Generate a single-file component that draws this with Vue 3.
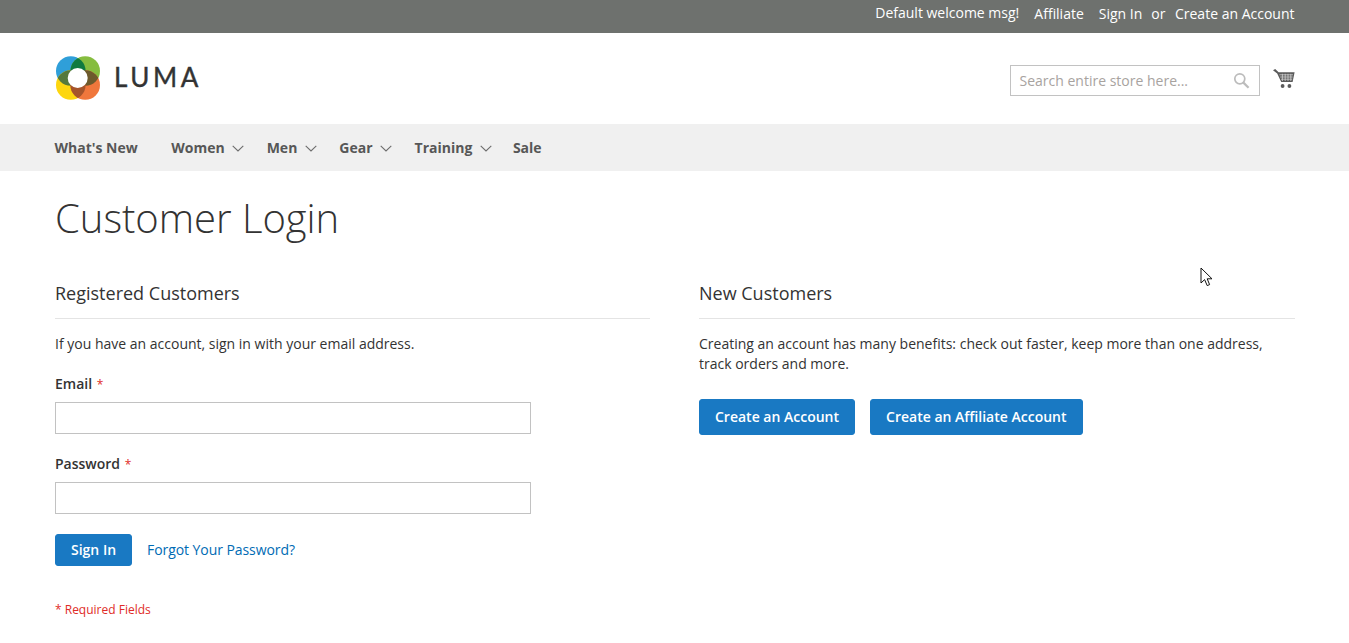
<script setup>
const topLinks = ['Affiliate', 'Sign In']
const navItems = [
  { label: "What's New", caret: false },
  { label: 'Women', caret: true },
  { label: 'Men', caret: true },
  { label: 'Gear', caret: true },
  { label: 'Training', caret: true },
  { label: 'Sale', caret: false }
]
</script>

<template>
  <div class="page">
    <div class="topbar">
      <span class="welcome">Default welcome msg!</span>
      <a v-for="l in topLinks" :key="l" class="toplink">{{ l }}</a>
      <span class="or">or</span>
      <a class="toplink last">Create an Account</a>
    </div>

    <header class="header">
      <div class="logo">
        <svg class="logo-mark" width="46" height="46" viewBox="0 0 46 46">
          <defs>
            <clipPath id="cb"><circle cx="15.8" cy="16" r="14.8" /></clipPath>
            <clipPath id="co"><circle cx="30.2" cy="30" r="14.8" /></clipPath>
          </defs>
          <circle cx="15.8" cy="16" r="14.8" fill="#2f9fd9" />
          <circle cx="30.2" cy="16" r="14.8" fill="#86bd3f" />
          <circle cx="15.8" cy="30" r="14.8" fill="#fdd60f" />
          <circle cx="30.2" cy="30" r="14.8" fill="#f0773c" />
          <g clip-path="url(#cb)"><circle cx="30.2" cy="16" r="14.8" fill="#0f7a40" /></g>
          <g clip-path="url(#cb)"><circle cx="15.8" cy="30" r="14.8" fill="#55793c" /></g>
          <g clip-path="url(#co)"><circle cx="30.2" cy="16" r="14.8" fill="#6d5a2c" /></g>
          <g clip-path="url(#co)"><circle cx="15.8" cy="30" r="14.8" fill="#a5542b" /></g>
          <circle cx="22.7" cy="23" r="10" fill="#fff" />
        </svg>
        <span class="logo-text">LUMA</span>
      </div>
      <div class="header-right">
        <div class="search">
          <span class="placeholder">Search entire store here...</span>
          <svg width="18" height="18" viewBox="0 0 18 18" fill="none" stroke="#bcbcbc">
            <circle cx="7.8" cy="6.8" r="5" stroke-width="1.7" />
            <path d="M11.4 10.6 16.6 15.8" stroke-width="2.2" />
          </svg>
        </div>
        <svg class="cart" width="22" height="20" viewBox="0 0 22 20">
          <path d="M0 1.2 2.2 0 5.6 3.2H21.6L19.6 13H8.2L4.2 4.4Z" fill="#5a5a5a" />
          <path d="M6.4 5.8H20M7.2 8H19.6M8 10.2H19.2M9.4 4.8V12M12.2 4.8V12M15 4.8V12M17.8 4.8V12" stroke="#d0d0d0" stroke-width=".8" fill="none" />
          <circle cx="9.6" cy="17" r="1.9" fill="#5a5a5a" />
          <circle cx="16.4" cy="17" r="1.9" fill="#5a5a5a" />
        </svg>
      </div>
    </header>

    <nav class="nav">
      <a v-for="n in navItems" :key="n.label" class="nav-item">
        <span>{{ n.label }}</span>
        <svg v-if="n.caret" class="caret" width="12" height="7" viewBox="0 0 12 7" fill="none">
          <path d="M.7.8 6 6 11.3.8" stroke="#6d6d6d" stroke-width="1.1" />
        </svg>
      </a>
    </nav>

    <main class="main">
      <h1 class="title">Customer Login</h1>
      <div class="columns">
        <section class="col">
          <h2 class="col-title">Registered Customers</h2>
          <p class="intro">If you have an account, sign in with your email address.</p>
          <label class="label">Email <em>*</em></label>
          <div class="input"></div>
          <label class="label">Password <em>*</em></label>
          <div class="input"></div>
          <div class="actions">
            <button class="btn">Sign In</button>
            <a class="forgot">Forgot Your Password?</a>
          </div>
          <p class="required">* Required Fields</p>
        </section>
        <section class="col right">
          <h2 class="col-title">New Customers</h2>
          <p class="intro">Creating an account has many benefits: check out faster, keep more than one address, track orders and more.</p>
          <div class="new-actions">
            <button class="btn">Create an Account</button>
            <button class="btn">Create an Affiliate Account</button>
          </div>
        </section>
      </div>
    </main>

    <svg class="cursor" width="14" height="21" viewBox="0 0 14 21">
      <path d="M1 1V16L4.6 12.6 7.2 18.6 9.6 17.6 7.2 11.8H12Z" fill="#fff" stroke="#111" stroke-width="1" stroke-linejoin="round" />
    </svg>
  </div>
</template>

<style>
html, body { margin: 0; background: #fff; }
</style>

<style scoped>
.page {
  position: relative;
  width: 1349px;
  height: 643px;
  overflow: hidden;
  font-family: "Open Sans", "Noto Sans", sans-serif;
  font-size: 14px;
  color: #333;
}
.topbar {
  height: 33px;
  box-sizing: border-box;
  background: #6e716e;
  color: #fff;
  display: flex;
  justify-content: flex-end;
  align-items: center;
  padding: 0 54.5px 6px 0;
  line-height: 20px;
}
.welcome { margin-right: 15px; padding-bottom: 2px; }
.toplink { margin-right: 15px; }
.toplink.last { margin-right: 0; }
.or { margin: 0 9.5px 0 -6px; }
.header {
  height: 91px;
  display: flex;
  justify-content: space-between;
  padding: 0 54px 0 55px;
}
.logo { display: flex; align-items: center; height: 89px; }
.logo-mark { margin-right: 13px; }
.logo-text {
  font-family: Lato, "Open Sans", sans-serif;
  font-size: 26px;
  letter-spacing: 3.6px;
  -webkit-text-stroke: 0.4px #333;
  color: #333;
  font-weight: 400;
  position: relative;
  top: -1px;
}
.header-right { display: flex; align-items: flex-start; padding-top: 32px; }
.search {
  width: 250px;
  height: 31px;
  box-sizing: border-box;
  border: 1px solid #c2c2c2;
  display: flex;
  align-items: center;
  justify-content: space-between;
  padding: 0 9px 0 8.5px;
}
.placeholder { color: #a8a3a0; font-size: 14px; }
.cart { margin-left: 13px; margin-top: 4px; }
.nav {
  height: 47px;
  background: #f0f0f0;
  display: flex;
  align-items: center;
  padding-left: 54.5px;
  color: #575757;
  font-weight: 700;
}
.nav-item { display: flex; align-items: center; margin-right: 33.5px; }
.nav-item:has(.caret) { margin-right: 22px; }
.nav-item:nth-child(5) { margin-right: 20.5px; }
.caret { margin-left: 7.5px; margin-right: 0.5px; margin-top: 2px; }
.main { padding: 0 54px 0 55px; }
.title {
  margin: 0;
  font-size: 40px;
  font-weight: 300;
  line-height: 50px;
  padding-top: 22px;
  color: #333;
  letter-spacing: -0.03px;
}
.columns { display: flex; margin-top: 38px; }
.col { width: 595px; }
.col.right { margin-left: 49px; width: 596px; }
.col-title {
  margin: 0;
  font-size: 18px;
  font-weight: 400;
  line-height: 24px;
  height: 37px;
  border-bottom: 1px solid #e4e4e4;
}
.intro { margin: 15px 0 0; line-height: 20px; color: #333; }
.label {
  display: block;
  margin-top: 20px;
  margin-bottom: -1px;
  font-weight: 600;
  line-height: 20px;
}
.label em { color: #e02b27; font-style: normal; font-weight: 400; margin-left: 1px; font-size: 12px; }
.input {
  width: 476px;
  height: 32px;
  box-sizing: border-box;
  background: #fff;
  border: 1px solid #c2c2c2;
  margin-top: 8px;
}
.actions { display: flex; align-items: center; margin-top: 20px; }
.btn {
  height: 36px;
  box-sizing: border-box;
  padding: 0 15px 2px;
  border: 1px solid #1979c3;
  border-radius: 3px;
  background: #1979c3;
  color: #fff;
  font-family: inherit;
  font-size: 14px;
  font-weight: 600;
}
.actions .btn { height: 32px; }
.forgot { color: #006bb4; margin-left: 15px; padding-bottom: 2px; letter-spacing: -0.07px; }
.required { margin: 34px 0 0; font-size: 12px; color: #e02b27; line-height: 20px; }
.new-actions { display: flex; gap: 15px; margin-top: 25px; }
.cursor { position: absolute; left: 1200px; top: 267px; }
</style>
